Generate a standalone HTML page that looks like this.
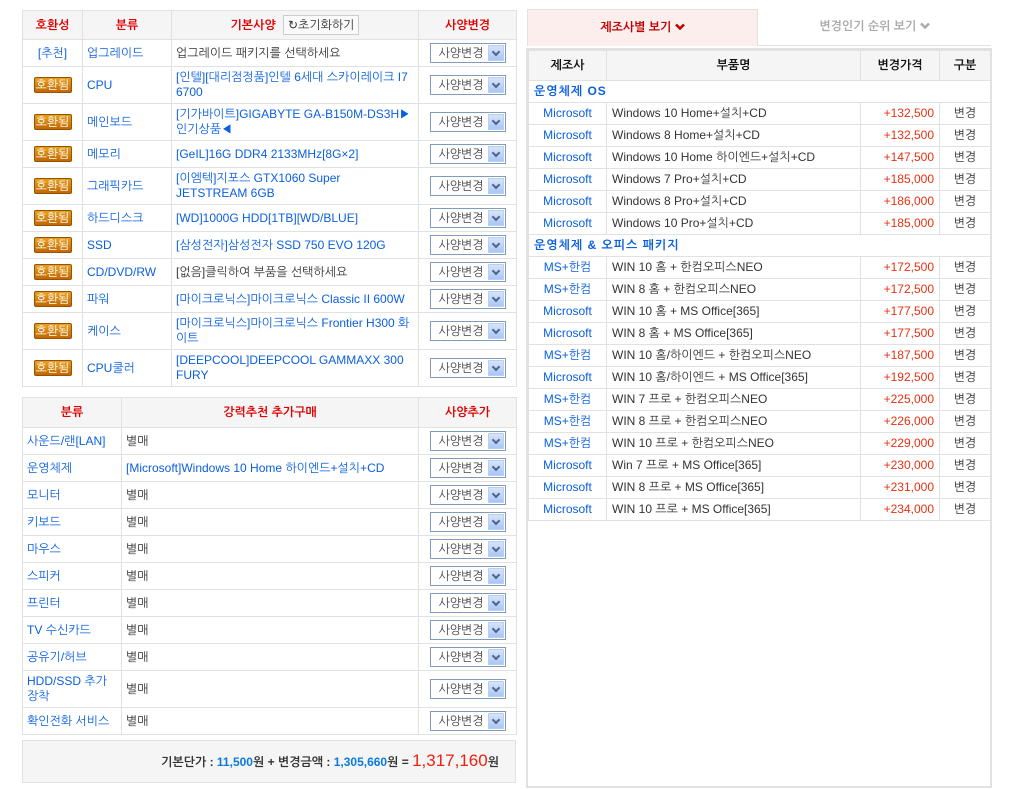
<!DOCTYPE html>
<html><head><meta charset="utf-8">
<style>
*{box-sizing:border-box;margin:0;padding:0}
body{width:1029px;height:789px;background:#fff;font-family:"Liberation Sans","NanumGothic","Noto Sans CJK KR",sans-serif;font-size:12px;color:#333;position:relative;overflow:hidden}
table{border-collapse:collapse;table-layout:fixed;position:absolute}
td,th{border:1px solid #e1e1e1;padding:0 4px;line-height:15px;vertical-align:middle}
th{background:#f5f5f5;color:#e00000;font-weight:bold;text-align:center}
.b{color:#0a5fe0}
.c{text-align:center}
.badge{display:inline-block;width:38px;height:16px;line-height:15px;background:linear-gradient(#e8a020,#c06800);border:1px solid #9a5200;color:#fff;font-size:12px;text-align:center;border-radius:2px}
.sel{display:inline-block;width:76px;height:20px;border:1px solid #7f9db9;position:relative;vertical-align:middle;text-align:left;padding-left:8px;line-height:18px;color:#444;background:#fff}
.sel i{position:absolute;right:1px;top:1px;width:16px;height:16px;background:linear-gradient(#d6e4fb,#aac6f5);border:1px solid #b9cff5}
.sel i:after{content:"";position:absolute;left:4px;top:3px;width:4px;height:4px;border-right:2px solid #4d6185;border-bottom:2px solid #4d6185;transform:rotate(45deg)}
.r{text-align:right;color:#e83010;padding-right:14px}
#rt td{padding:0 5px}
.sec{color:#0a5fe0;font-weight:bold;letter-spacing:1px}
</style></head><body>

<table style="left:22px;top:10px;width:494px">
<colgroup><col style="width:60px"><col style="width:89px"><col style="width:247px"><col style="width:98px"></colgroup>
<tr style="height:29px"><th>호환성</th><th>분류</th><th>기본사양 <span style="display:inline-block;border:1px solid #ccc;background:#fafafa;color:#333;font-weight:normal;padding:0 4px;line-height:18px;margin-left:4px">↻초기화하기</span></th><th>사양변경</th></tr>
<tr style="height:27px"><td class="c b">[추천]</td><td class="b">업그레이드</td><td>업그레이드 패키지를 선택하세요</td><td class="c"><span class="sel">사양변경<i></i></span></td></tr>
<tr style="height:37px"><td class="c"><span class="badge">호환됨</span></td><td class="b">CPU</td><td class="b">[인텔][대리점정품]인텔 6세대 스카이레이크 I7 6700</td><td class="c"><span class="sel">사양변경<i></i></span></td></tr>
<tr style="height:37px"><td class="c"><span class="badge">호환됨</span></td><td class="b">메인보드</td><td class="b">[기가바이트]GIGABYTE GA-B150M-DS3H▶인기상품◀</td><td class="c"><span class="sel">사양변경<i></i></span></td></tr>
<tr style="height:27px"><td class="c"><span class="badge">호환됨</span></td><td class="b">메모리</td><td class="b">[GeIL]16G DDR4 2133MHz[8G×2]</td><td class="c"><span class="sel">사양변경<i></i></span></td></tr>
<tr style="height:37px"><td class="c"><span class="badge">호환됨</span></td><td class="b">그래픽카드</td><td class="b">[이엠텍]지포스 GTX1060 Super JETSTREAM 6GB</td><td class="c"><span class="sel">사양변경<i></i></span></td></tr>
<tr style="height:27px"><td class="c"><span class="badge">호환됨</span></td><td class="b">하드디스크</td><td class="b">[WD]1000G HDD[1TB][WD/BLUE]</td><td class="c"><span class="sel">사양변경<i></i></span></td></tr>
<tr style="height:27px"><td class="c"><span class="badge">호환됨</span></td><td class="b">SSD</td><td class="b">[삼성전자]삼성전자 SSD 750 EVO 120G</td><td class="c"><span class="sel">사양변경<i></i></span></td></tr>
<tr style="height:27px"><td class="c"><span class="badge">호환됨</span></td><td class="b">CD/DVD/RW</td><td>[없음]클릭하여 부품을 선택하세요</td><td class="c"><span class="sel">사양변경<i></i></span></td></tr>
<tr style="height:27px"><td class="c"><span class="badge">호환됨</span></td><td class="b">파워</td><td class="b">[마이크로닉스]마이크로닉스 Classic II 600W</td><td class="c"><span class="sel">사양변경<i></i></span></td></tr>
<tr style="height:37px"><td class="c"><span class="badge">호환됨</span></td><td class="b">케이스</td><td class="b">[마이크로닉스]마이크로닉스 Frontier H300 화이트</td><td class="c"><span class="sel">사양변경<i></i></span></td></tr>
<tr style="height:37px"><td class="c"><span class="badge">호환됨</span></td><td class="b">CPU쿨러</td><td class="b">[DEEPCOOL]DEEPCOOL GAMMAXX 300 FURY</td><td class="c"><span class="sel">사양변경<i></i></span></td></tr>
</table>

<table style="left:22px;top:397px;width:494px">
<colgroup><col style="width:99px"><col style="width:297px"><col style="width:98px"></colgroup>
<tr style="height:30px"><th>분류</th><th>강력추천 추가구매</th><th>사양추가</th></tr>
<tr style="height:27px"><td class="b">사운드/랜[LAN]</td><td>별매</td><td class="c"><span class="sel">사양변경<i></i></span></td></tr>
<tr style="height:27px"><td class="b">운영체제</td><td class="b">[Microsoft]Windows 10 Home 하이엔드+설치+CD</td><td class="c"><span class="sel">사양변경<i></i></span></td></tr>
<tr style="height:27px"><td class="b">모니터</td><td>별매</td><td class="c"><span class="sel">사양변경<i></i></span></td></tr>
<tr style="height:27px"><td class="b">키보드</td><td>별매</td><td class="c"><span class="sel">사양변경<i></i></span></td></tr>
<tr style="height:27px"><td class="b">마우스</td><td>별매</td><td class="c"><span class="sel">사양변경<i></i></span></td></tr>
<tr style="height:27px"><td class="b">스피커</td><td>별매</td><td class="c"><span class="sel">사양변경<i></i></span></td></tr>
<tr style="height:27px"><td class="b">프린터</td><td>별매</td><td class="c"><span class="sel">사양변경<i></i></span></td></tr>
<tr style="height:27px"><td class="b">TV 수신카드</td><td>별매</td><td class="c"><span class="sel">사양변경<i></i></span></td></tr>
<tr style="height:27px"><td class="b">공유기/허브</td><td>별매</td><td class="c"><span class="sel">사양변경<i></i></span></td></tr>
<tr style="height:37px"><td class="b">HDD/SSD 추가장착</td><td>별매</td><td class="c"><span class="sel">사양변경<i></i></span></td></tr>
<tr style="height:27px"><td class="b">확인전화 서비스</td><td>별매</td><td class="c"><span class="sel">사양변경<i></i></span></td></tr>
</table>

<div style="position:absolute;left:22px;top:740px;width:494px;height:43px;background:#f5f5f5;border:1px solid #e1e1e1;text-align:right;padding-right:16px;line-height:40px;font-weight:bold;color:#333">기본단가 : <span style="color:#0a7ae0">11,500</span>원 + 변경금액 : <span style="color:#0a7ae0">1,305,660</span>원 = <span style="color:#f02010;font-size:17px;font-weight:normal">1,317,160</span>원</div>

<div style="position:absolute;left:527px;top:9px;width:231px;height:37px;background:#fdeeee;border:1px solid #e1e1e1;border-bottom:none;text-align:center;line-height:35px;color:#c00000;font-weight:bold">제조사별 보기 <svg width="10" height="8" viewBox="0 0 10 8" style="vertical-align:0"><path d="M1 1.5 L5 5.5 L9 1.5" fill="none" stroke="#c00000" stroke-width="2.5"/></svg></div>
<div style="position:absolute;left:758px;top:9px;width:233px;height:37px;text-align:center;line-height:35px;color:#aaa;font-weight:bold;border-bottom:1px solid #e1e1e1">변경인기 순위 보기 <svg width="10" height="8" viewBox="0 0 10 8" style="vertical-align:0"><path d="M1 1.5 L5 5.5 L9 1.5" fill="none" stroke="#aaa" stroke-width="2.5"/></svg></div>
<div style="position:absolute;left:526px;top:48px;width:466px;height:740px;border:2px solid #e1e1e1"></div>

<table id="rt" style="left:528px;top:50px;width:462px">
<colgroup><col style="width:78px"><col style="width:254px"><col style="width:79px"><col style="width:51px"></colgroup>
<tr style="height:30px"><th style="color:#111">제조사</th><th style="color:#111">부품명</th><th style="color:#111">변경가격</th><th style="color:#111">구분</th></tr>
<tr style="height:22px"><td colspan="4" class="sec">운영체제 OS</td></tr>
<tr style="height:22px"><td class="c b">Microsoft</td><td>Windows 10 Home+설치+CD</td><td class="r">+132,500</td><td class="c">변경</td></tr>
<tr style="height:22px"><td class="c b">Microsoft</td><td>Windows 8 Home+설치+CD</td><td class="r">+132,500</td><td class="c">변경</td></tr>
<tr style="height:22px"><td class="c b">Microsoft</td><td>Windows 10 Home 하이엔드+설치+CD</td><td class="r">+147,500</td><td class="c">변경</td></tr>
<tr style="height:22px"><td class="c b">Microsoft</td><td>Windows 7 Pro+설치+CD</td><td class="r">+185,000</td><td class="c">변경</td></tr>
<tr style="height:22px"><td class="c b">Microsoft</td><td>Windows 8 Pro+설치+CD</td><td class="r">+186,000</td><td class="c">변경</td></tr>
<tr style="height:22px"><td class="c b">Microsoft</td><td>Windows 10 Pro+설치+CD</td><td class="r">+185,000</td><td class="c">변경</td></tr>
<tr style="height:22px"><td colspan="4" class="sec">운영체제 &amp; 오피스 패키지</td></tr>
<tr style="height:22px"><td class="c b">MS+한컴</td><td>WIN 10 홈 + 한컴오피스NEO</td><td class="r">+172,500</td><td class="c">변경</td></tr>
<tr style="height:22px"><td class="c b">MS+한컴</td><td>WIN 8 홈 + 한컴오피스NEO</td><td class="r">+172,500</td><td class="c">변경</td></tr>
<tr style="height:22px"><td class="c b">Microsoft</td><td>WIN 10 홈 + MS Office[365]</td><td class="r">+177,500</td><td class="c">변경</td></tr>
<tr style="height:22px"><td class="c b">Microsoft</td><td>WIN 8 홈 + MS Office[365]</td><td class="r">+177,500</td><td class="c">변경</td></tr>
<tr style="height:22px"><td class="c b">MS+한컴</td><td>WIN 10 홈/하이엔드 + 한컴오피스NEO</td><td class="r">+187,500</td><td class="c">변경</td></tr>
<tr style="height:22px"><td class="c b">Microsoft</td><td>WIN 10 홈/하이엔드 + MS Office[365]</td><td class="r">+192,500</td><td class="c">변경</td></tr>
<tr style="height:22px"><td class="c b">MS+한컴</td><td>WIN 7 프로 + 한컴오피스NEO</td><td class="r">+225,000</td><td class="c">변경</td></tr>
<tr style="height:22px"><td class="c b">MS+한컴</td><td>WIN 8 프로 + 한컴오피스NEO</td><td class="r">+226,000</td><td class="c">변경</td></tr>
<tr style="height:22px"><td class="c b">MS+한컴</td><td>WIN 10 프로 + 한컴오피스NEO</td><td class="r">+229,000</td><td class="c">변경</td></tr>
<tr style="height:22px"><td class="c b">Microsoft</td><td>Win 7 프로 + MS Office[365]</td><td class="r">+230,000</td><td class="c">변경</td></tr>
<tr style="height:22px"><td class="c b">Microsoft</td><td>WIN 8 프로 + MS Office[365]</td><td class="r">+231,000</td><td class="c">변경</td></tr>
<tr style="height:22px"><td class="c b">Microsoft</td><td>WIN 10 프로 + MS Office[365]</td><td class="r">+234,000</td><td class="c">변경</td></tr>
</table>
</body></html>
